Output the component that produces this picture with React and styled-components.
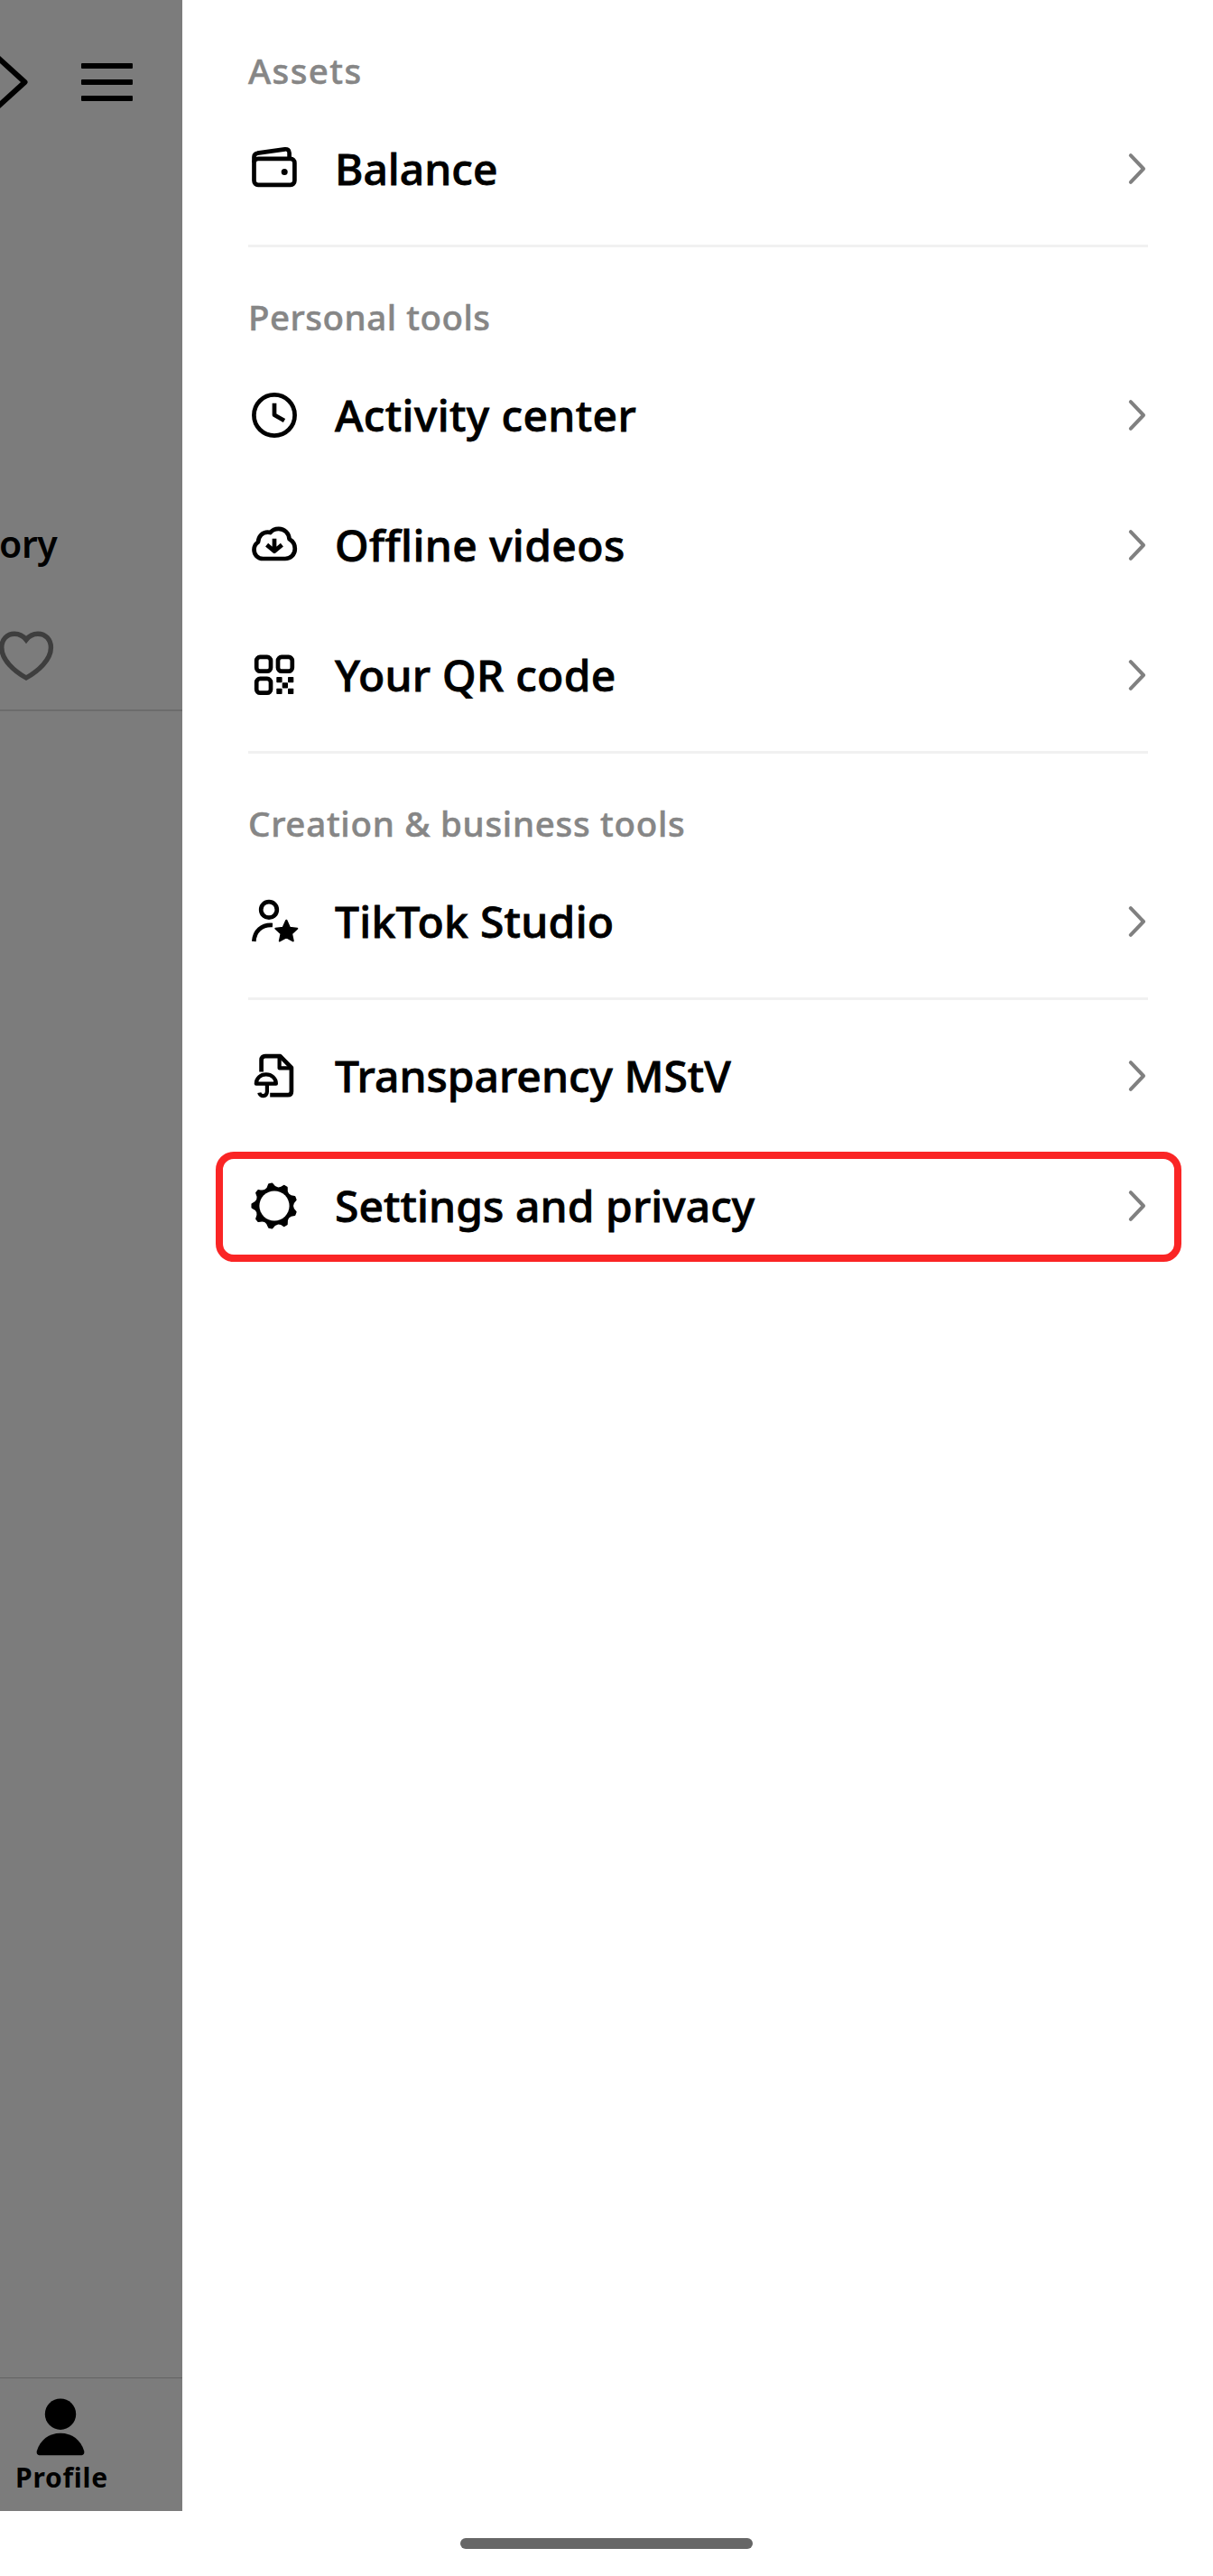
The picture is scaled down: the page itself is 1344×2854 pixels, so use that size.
import React from 'react';
import styled, { createGlobalStyle } from 'styled-components';

const GlobalStyle = createGlobalStyle`
	body {
		margin: 0;
		background: #fff;
		font-family: 'Noto Sans', 'Open Sans', sans-serif;
	}
`;

const Screen = styled.div`
	width: 1344px;
	height: 2854px;
	display: flex;
	flex-direction: column;
	overflow: hidden;
	background: #fff;
`;

const Body = styled.div`
	display: flex;
	height: 2782px;
`;

const Backdrop = styled.aside`
	width: 202px;
	display: flex;
	flex-direction: column;
	overflow: hidden;
	background: #7c7c7c;
	color: #000;
`;

const TopBar = styled.div`
	height: 182px;
	display: flex;
	align-items: center;
	gap: 57px;
`;

const MenuButton = styled.div`
	width: 57px;
	display: flex;
	flex-direction: column;
	gap: 12px;
`;

const MenuBar = styled.span`
	height: 6px;
	border-radius: 1px;
	background: #000;
`;

const Story = styled.div`
	margin: 395px 0 0 -1px;
	font-size: 41px;
	font-weight: 600;
	line-height: 50px;
	letter-spacing: -0.4px;
`;

const TabStrip = styled.div`
	height: 161px;
	box-sizing: border-box;
	padding-top: 70px;
	border-bottom: 2px solid #6c6c6c;
`;

const BottomTab = styled.div`
	height: 148px;
	box-sizing: border-box;
	margin-top: auto;
	padding-top: 20px;
	border-top: 1px solid #636363;
	display: flex;
	flex-direction: column;
	align-items: flex-start;
`;

const TabLabel = styled.span`
	margin: 4px 0 0 17px;
	font-size: 30px;
	font-weight: 700;
	line-height: 36px;
	letter-spacing: 0.75px;
`;

const Drawer = styled.main`
	flex: 1;
	padding: 1px 72px 0 73px;
`;

const Section = styled.section`
	padding: 12px 0;

	& + & {
		border-top: 3px solid #f1f1f1;
	}
`;

const Heading = styled.h2`
	height: 102px;
	box-sizing: border-box;
	margin: 0;
	padding-top: 39px;
	font-size: 38.5px;
	font-weight: 500;
	line-height: 52px;
	letter-spacing: ${p => p.$tracking}px;
	color: #868686;
	-webkit-text-stroke: 0.5px #868686;
`;

const Row = styled.div`
	height: 144px;
	display: flex;
	align-items: center;
	position: relative;
`;

const IconSvg = styled.svg`
	margin-left: -1px;
`;

const Label = styled.span`
	flex: 1;
	margin-left: 37px;
	padding-bottom: 1px;
	font-size: 48px;
	font-weight: 500;
	line-height: 60px;
	letter-spacing: ${p => p.$tracking}px;
	color: #000;
	-webkit-text-stroke: 0.8px #000;
	white-space: nowrap;
`;

const Highlight = styled.div`
	position: absolute;
	inset: 12px -37px 10px -36px;
	border: 8px solid #fa2525;
	border-radius: 20px;
`;

const GestureArea = styled.footer`
	flex: 1;
	display: flex;
	justify-content: center;
	align-items: center;
`;

const GestureBar = styled.div`
	width: 324px;
	height: 12px;
	border-radius: 6px;
	background: #666;
`;

const Icon = ({ children }) => (
	<IconSvg width="60" height="60" viewBox="0 0 60 60" fill="none" stroke="#000" strokeWidth="4.7" strokeLinejoin="round">
		{children}
	</IconSvg>
);

const WalletIcon = () => (
	<Icon>
		<rect x="7.5" y="18.9" width="44.9" height="28.9" rx="4.5" />
		<path d="M7.5 23V17c0-2.4 1.6-3.9 3.8-4.3L41.6 8.3c2.9-.4 5 1.3 5 4.2v6.4" />
		<circle cx="41.2" cy="33.4" r="3.5" fill="#000" stroke="none" />
	</Icon>
);

const ClockIcon = () => (
	<Icon>
		<circle cx="30" cy="30" r="22.6" />
		<path d="M30 16.8V29.8L41 36" />
	</Icon>
);

const CloudIcon = () => (
	<Icon>
		<path d="M17.5 45C11.5 45 7.5 40.4 7.5 35c0-3.6 1.8-6.6 4.5-8.4C12.3 20 17 15.6 22.6 15.6c1 0 2 .1 2.9.4C27.5 13.4 30.9 11.8 34.8 11.8c6.5 0 11.3 4.9 11.8 11.4 3.8 2.2 6.2 6.2 6.2 10.8C52.8 40.4 48 45 42 45Z" />
		<path d="M30 22.8V36.5M21.6 29.6l8.4 7.2 8.4-7.2" />
	</Icon>
);

const qrDots = [[32.3, 32], [45, 32], [38.7, 38.3], [32.3, 44.7], [45, 44.7]];

const QrIcon = () => (
	<Icon>
		<rect x="10.2" y="9.9" width="15.8" height="15.8" rx="4" />
		<rect x="34" y="9.9" width="15.8" height="15.8" rx="4" />
		<rect x="10.2" y="33.9" width="15.8" height="15.8" rx="4" />
		{qrDots.map(([x, y]) => (
			<rect key={`${x}-${y}`} x={x} y={y} width="6.3" height="6.3" rx="0.8" fill="#000" stroke="none" />
		))}
	</Icon>
);

const StudioIcon = () => (
	<Icon>
		<circle cx="24" cy="16.9" r="8.8" />
		<path d="M7.3 52C8 41 15.5 33.2 28 34" />
		<path d="M43.3 28.8l3.6 8 8.3 1-6.2 5.6 1.7 8-7.4-4.2-7.4 4.2 1.7-8-6.2-5.6 8.3-1Z" fill="#000" strokeWidth="2.2" />
	</Icon>
);

const DocumentIcon = () => (
	<Icon>
		<path d="M15.6 25.6V12.4c0-2.7 1.6-4.3 4.3-4.3H36.4L48.9 20.8V47.2c0 2.6-1.4 4-4 4H25.2" />
		<path d="M35.6 8.2V21.4H49" strokeWidth="4.2" />
		<path d="M9.8 38.7C9.8 32.6 14.7 28.4 20.8 28.4S31.9 32.6 31.9 38.7Z" strokeWidth="4.2" />
		<path d="M21.9 39V47.6c0 5.8-7.9 6-8.6 1" strokeWidth="4.2" />
	</Icon>
);

const polar = (r, deg) => {
	const a = (deg * Math.PI) / 180;
	return `${(30 + r * Math.cos(a)).toFixed(2)} ${(30 + r * Math.sin(a)).toFixed(2)}`;
};

// nine rounded teeth, first one pointing left
const gearPath = Array.from({ length: 9 }, (_, i) => {
	const a = 180 + i * 40;
	return `${i ? 'L' : 'M'}${polar(24.6, a - 4)}L${polar(24.6, a + 4)}Q${polar(16.4, a + 20)} ${polar(24.6, a + 36)}`;
}).join('');

const GearIcon = () => (
	<Icon>
		<path d={`${gearPath}Z`} fill="#000" strokeWidth="2" />
		<circle cx="30" cy="30" r="16.6" fill="#fff" stroke="none" />
	</Icon>
);

const Chevron = () => (
	<svg width="24" height="40" viewBox="0 0 24 40" fill="none" stroke="#808080" strokeWidth="4" strokeLinecap="round" strokeLinejoin="round">
		<path d="M4.8 5.2L19 20L4.8 34.8" />
	</svg>
);

const sections = [
	{
		title: 'Assets',
		tracking: 1.4,
		items: [{ label: 'Balance', icon: WalletIcon, tracking: 0 }]
	},
	{
		title: 'Personal tools',
		tracking: 0.5,
		items: [
			{ label: 'Activity center', icon: ClockIcon, tracking: 0.4 },
			{ label: 'Offline videos', icon: CloudIcon, tracking: 0.4 },
			{ label: 'Your QR code', icon: QrIcon, tracking: 0.25 }
		]
	},
	{
		title: 'Creation & business tools',
		tracking: 0.7,
		items: [{ label: 'TikTok Studio', icon: StudioIcon, tracking: 0.27 }]
	},
	{
		items: [
			{ label: 'Transparency MStV', icon: DocumentIcon, tracking: 0 },
			{ label: 'Settings and privacy', icon: GearIcon, tracking: 0.07, highlighted: true }
		]
	}
];

const MenuRow = ({ label, icon: RowIcon, tracking, highlighted }) => (
	<Row>
		<RowIcon />
		<Label $tracking={tracking}>{label}</Label>
		<Chevron />
		{highlighted && <Highlight />}
	</Row>
);

const App = () => (
	<Screen>
		<GlobalStyle />
		<Body>
			<Backdrop>
				<TopBar>
					<svg width="33" height="66" viewBox="0 0 33 66" fill="none" stroke="#000" strokeWidth="6" strokeLinejoin="round">
						<path d="M-6 2.5L27.5 33L-6 63.5" />
					</svg>
					<MenuButton>
						<MenuBar />
						<MenuBar />
						<MenuBar />
					</MenuButton>
				</TopBar>
				<Story>ory</Story>
				<TabStrip>
					<svg width="62" height="60" viewBox="0 0 62 60" fill="none" stroke="#3e3e3e" strokeWidth="5.4">
						<path d="M29 11.8C25.8 7.6 21.3 5.2 16 5.2C7.6 5.2 1.8 11.5 1.8 20.5C1.8 34 15.5 46.5 29 54C42.5 46.5 56.4 34 56.4 20.5C56.4 11.5 50.4 5.2 42 5.2C36.7 5.2 32.2 7.6 29 11.8Z" />
					</svg>
				</TabStrip>
				<BottomTab>
					<svg width="134" height="68" viewBox="0 0 134 68">
						<circle cx="67" cy="19.7" r="17.2" />
						<path d="M67 40.7C54 40.7 44.5 48.5 40.9 60.2C40 63.3 41.6 65.3 44.6 65.3H89.4C92.4 65.3 94 63.3 93.1 60.2C89.5 48.5 80 40.7 67 40.7Z" />
					</svg>
					<TabLabel>Profile</TabLabel>
				</BottomTab>
			</Backdrop>
			<Drawer>
				{sections.map(({ title, tracking, items }) => (
					<Section key={title || 'other'}>
						{title && <Heading $tracking={tracking}>{title}</Heading>}
						{items.map(item => (
							<MenuRow key={item.label} {...item} />
						))}
					</Section>
				))}
			</Drawer>
		</Body>
		<GestureArea>
			<GestureBar />
		</GestureArea>
	</Screen>
);

export default App;
